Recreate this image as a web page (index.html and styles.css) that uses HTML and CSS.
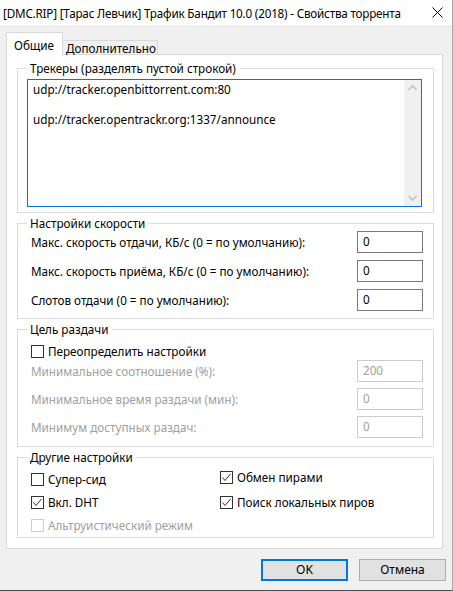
FILE: index.html
```html
<!DOCTYPE html>
<html lang="ru">
<head>
<meta charset="utf-8">
<title>Свойства торрента</title>
<link rel="stylesheet" href="styles.css">
</head>
<body>
<div class="window">
  <div class="titlebar">
    <span class="title">[DMC.RIP] [Тарас Левчик] Трафик Бандит 10.0 (2018) - Свойства торрента</span>
    <svg class="close" width="11" height="11" viewBox="0 0 11 11"><path d="M0.5 0.5L10.5 10.5M10.5 0.5L0.5 10.5" stroke="#000" stroke-width="1"/></svg>
  </div>
  <div class="client">
    <div class="tabs">
      <div class="tab active">Общие</div>
      <div class="tab">Дополнительно</div>
    </div>
    <div class="panel">
      <div class="group g-trackers">
        <div class="legend">Трекеры (разделять пустой строкой)</div>
        <div class="textarea">
          <div class="ta-text">udp://tracker.openbittorrent.com:80<br><br>udp://tracker.opentrackr.org:1337/announce</div>
          <div class="scrollbar">
            <svg width="17" height="17" viewBox="0 0 17 17"><path d="M4.5 10L8.5 6L12.5 10" fill="none" stroke="#c2c2c2" stroke-width="1.6"/></svg>
            <svg width="17" height="17" viewBox="0 0 17 17"><path d="M4.5 7L8.5 11L12.5 7" fill="none" stroke="#c2c2c2" stroke-width="1.6"/></svg>
          </div>
        </div>
      </div>

      <div class="group g-speed">
        <div class="legend">Настройки скорости</div>
        <div class="rows">
          <div class="row"><span>Макс. скорость отдачи, КБ/с (0 = по умолчанию):</span><div class="input">0</div></div>
          <div class="row"><span>Макс. скорость приёма, КБ/с (0 = по умолчанию):</span><div class="input">0</div></div>
          <div class="row"><span>Слотов отдачи (0 = по умолчанию):</span><div class="input">0</div></div>
        </div>
      </div>

      <div class="group g-seed">
        <div class="legend">Цель раздачи</div>
        <div class="check-row first"><span class="cb"></span><span class="cb-label">Переопределить настройки</span></div>
        <div class="rows disabled">
          <div class="row"><span>Минимальное соотношение (%):</span><div class="input">200</div></div>
          <div class="row"><span>Минимальное время раздачи (мин):</span><div class="input">0</div></div>
          <div class="row"><span>Минимум доступных раздач:</span><div class="input">0</div></div>
        </div>
      </div>

      <div class="group g-other">
        <div class="legend">Другие настройки</div>
        <div class="cols">
          <div class="col col-left">
            <div class="check-row"><span class="cb"></span><span class="cb-label">Супер-сид</span></div>
            <div class="check-row"><span class="cb checked"><svg width="11" height="11" viewBox="0 0 11 11"><path d="M1.5 5.5L4 8.5L9.5 2" fill="none" stroke="#333" stroke-width="1"/></svg></span><span class="cb-label">Вкл. DHT</span></div>
            <div class="check-row off"><span class="cb"></span><span class="cb-label">Альтруистический режим</span></div>
          </div>
          <div class="col col-right">
            <div class="check-row"><span class="cb checked"><svg width="11" height="11" viewBox="0 0 11 11"><path d="M1.5 5.5L4 8.5L9.5 2" fill="none" stroke="#333" stroke-width="1"/></svg></span><span class="cb-label">Обмен пирами</span></div>
            <div class="check-row"><span class="cb checked"><svg width="11" height="11" viewBox="0 0 11 11"><path d="M1.5 5.5L4 8.5L9.5 2" fill="none" stroke="#333" stroke-width="1"/></svg></span><span class="cb-label">Поиск локальных пиров</span></div>
          </div>
        </div>
      </div>
    </div>
    <div class="buttons">
      <button class="btn default">OK</button>
      <button class="btn">Отмена</button>
    </div>
  </div>
</div>
</body>
</html>
```

FILE: styles.css
```css
* { box-sizing: border-box; }
html, body { margin: 0; padding: 0; }
body {
  width: 453px;
  height: 591px;
  overflow: hidden;
  background: #f0f0f0;
  font-family: "Noto Sans", "Open Sans", sans-serif;
  font-size: 11.7px;
  color: #000;
}
.window {
  width: 453px;
  height: 591px;
  border-right: 1px solid #a9a9a9;
  border-bottom: 1px solid #4a4a4a;
}
.titlebar {
  height: 25px;
  background: #fff;
  display: flex;
  align-items: center;
  justify-content: space-between;
  padding: 0 9px 0 3px;
  line-height: 16px;
}
.title { letter-spacing: -0.2px; }
.close { display: block; }
.client { padding: 7px 9px 0 6px; }
.tabs { display: flex; height: 22px; align-items: flex-start; }
.tab {
  border: 1px solid #d9d9d9;
  border-bottom: none;
  line-height: 16px;
}
.tab.active {
  position: relative;
  z-index: 1;
  height: 23px;
  width: 57px;
  background: #fff;
  padding: 4px 0 0 7px;
}
.tab:not(.active) {
  margin-top: 8px;
  height: 14px;
  width: 95px;
  border-left: none;
  background: #f0f0f0;
  padding: 0 0 0 3px;
  line-height: 15px;
}
.panel {
  background: #fff;
  border: 1px solid #d9d9d9;
  padding: 13px 8px 10px 10px;
}
.group {
  border: 1px solid #dcdcdc;
  margin-top: 10px;
}
.group.g-trackers { margin-top: 0; padding-bottom: 5px; }
.legend {
  width: fit-content;
  margin: -9px 0 0 9px;
  padding: 0 4px 0 3px;
  background: #fff;
  line-height: 16px;
}
.textarea {
  margin: 3px 11px 0 9px;
  height: 128px;
  border: 1px solid #0078d7;
  display: flex;
}
.ta-text {
  flex: 1;
  padding: 2px 5px;
  line-height: 15px;
}
.scrollbar {
  width: 17px;
  background: #f0f0f0;
  display: flex;
  flex-direction: column;
  justify-content: space-between;
}
.scrollbar svg { display: block; }
.rows {
  display: flex;
  flex-direction: column;
  margin: 0 10px 0 13px;
}
.row {
  display: flex;
  align-items: center;
  justify-content: space-between;
  height: 22px;
}
.g-speed { padding-bottom: 7px; }
.g-speed .rows { gap: 7px; }
.g-seed { padding-bottom: 8px; }
.g-seed .rows { gap: 6px; margin-top: 1px; }
.input {
  width: 66px;
  height: 22px;
  border: 1px solid #7a7a7a;
  background: #fff;
  padding: 1px 0 0 5px;
  line-height: 17px;
}
.disabled { color: #a0a0a0; }
.disabled .input { border-color: #cccccc; }
.check-row {
  display: flex;
  align-items: center;
  height: 15px;
}
.check-row.first { margin: 7px 10px 0 13px; }
.cb {
  width: 13px;
  height: 13px;
  border: 1px solid #333;
  background: #fff;
  flex: none;
  display: flex;
  align-items: center;
  justify-content: center;
}
.cb svg { display: block; }
.cb-label { margin-left: 4px; line-height: 15px; }
.check-row.off { color: #a0a0a0; }
.check-row.off .cb { border-color: #cccccc; }
.g-other { padding-bottom: 4px; }
.cols { display: flex; margin: 0 10px 0 13px; }
.col { display: flex; flex-direction: column; }
.col-left { width: 189px; margin-top: 7px; gap: 8px; }
.col-right { margin-top: 5px; gap: 10px; }
.buttons {
  display: flex;
  justify-content: flex-end;
  gap: 11px;
  margin: 10px -3px 0 0;
}
.btn {
  width: 87px;
  height: 22px;
  background: #e1e1e1;
  border: 1px solid #adadad;
  font-family: inherit;
  font-size: 12px;
  color: #000;
  padding: 0;
  margin: 0;
  line-height: 18px;
}
.btn.default { border: 2px solid #0078d7; }
```
